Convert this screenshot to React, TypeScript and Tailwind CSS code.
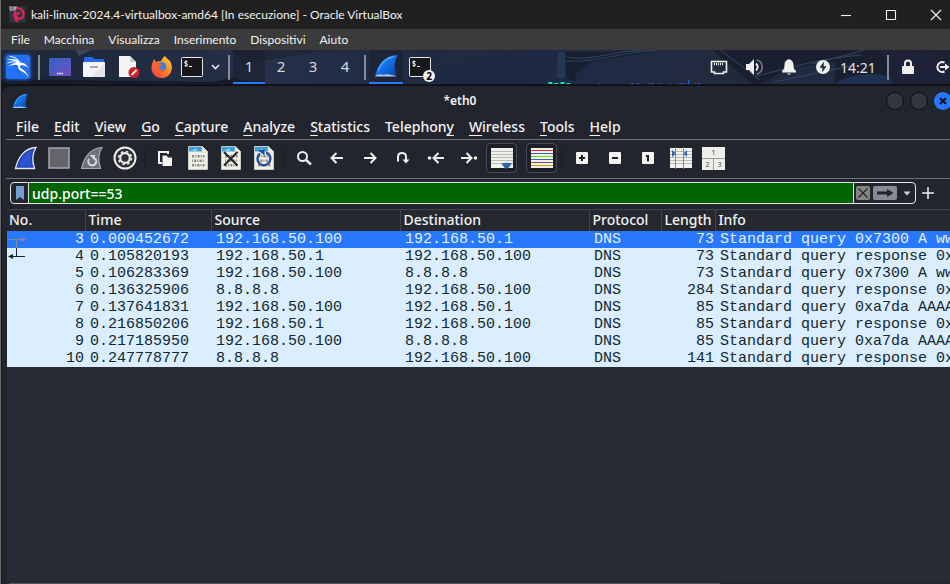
import type { ReactNode } from "react";

const hostMenu = ["File", "Macchina", "Visualizza", "Inserimento", "Dispositivi", "Aiuto"];

const menu: [string, string, string][] = [
  ["", "F", "ile"],
  ["", "E", "dit"],
  ["", "V", "iew"],
  ["", "G", "o"],
  ["", "C", "apture"],
  ["", "A", "nalyze"],
  ["", "S", "tatistics"],
  ["Telephon", "y", ""],
  ["", "W", "ireless"],
  ["", "T", "ools"],
  ["", "H", "elp"],
];

const packets = [
  [3, "0.000452672", "192.168.50.100", "192.168.50.1", "DNS", 73, "Standard query 0x7300 A ww"],
  [4, "0.105820193", "192.168.50.1", "192.168.50.100", "DNS", 73, "Standard query response 0x"],
  [5, "0.106283369", "192.168.50.100", "8.8.8.8", "DNS", 73, "Standard query 0x7300 A ww"],
  [6, "0.136325906", "8.8.8.8", "192.168.50.100", "DNS", 284, "Standard query response 0x"],
  [7, "0.137641831", "192.168.50.100", "192.168.50.1", "DNS", 85, "Standard query 0xa7da AAAA"],
  [8, "0.216850206", "192.168.50.1", "192.168.50.100", "DNS", 85, "Standard query response 0x"],
  [9, "0.217185950", "192.168.50.100", "8.8.8.8", "DNS", 85, "Standard query 0xa7da AAAA"],
  [10, "0.247778777", "8.8.8.8", "192.168.50.100", "DNS", 141, "Standard query response 0x"],
] as const;

const columns = ["No.", "Time", "Source", "Destination", "Protocol", "Length", "Info"];

const ruleColors = ["#ef2929", "#3465a4", "#73d216", "#3465a4", "#75507b", "#c4a000"];

function Icon({ children, size = 24 }: { children: ReactNode; size?: number }) {
  return (
    <svg width={size} height={size} viewBox={`0 0 ${size} ${size}`} className="shrink-0" aria-hidden="true">
      {children}
    </svg>
  );
}

function PanelButton({ label, className, children }: { label: string; className: string; children: ReactNode }) {
  return (
    <button type="button" aria-label={label} className={`flex h-full shrink-0 items-center justify-center ${className}`}>
      {children}
    </button>
  );
}

function PanelSeparator() {
  return <span className="mx-[3px] h-[25px] w-[2px] shrink-0 bg-[#858b96]" />;
}

function ToolButton({ label, checked, children }: { label: string; checked?: boolean; children: ReactNode }) {
  return (
    <button type="button" aria-label={label} className="flex h-full w-[33px] shrink-0 items-center justify-center">
      <span
        className={`flex items-center justify-center rounded ${
          checked ? "h-[30px] w-[31px] border border-[#484b55] bg-[#1d1f28]" : "h-6 w-6"
        }`}
      >
        {children}
      </span>
    </button>
  );
}

function ToolSeparator() {
  return <span className="mx-[3px] h-[18px] w-px shrink-0 bg-[#1c1e26]" />;
}

function BlueFin({ size }: { size: number }) {
  return (
    <svg width={size} height={size} viewBox="0 0 24 24" className="shrink-0" aria-hidden="true">
      <defs>
        <linearGradient id={`fin${size}`} x1="0" y1="0" x2="1" y2="1">
          <stop offset="0" stopColor="#2f8df2" />
          <stop offset="0.5" stopColor="#126fe6" />
          <stop offset="1" stopColor="#0a3f9f" />
        </linearGradient>
      </defs>
      <path d="M1 22 C4 10 10 1.500 24 1 C20.500 6 19.500 14 22.500 22 Z" fill={`url(#fin${size})`} />
      <path d="M4 17 C7 9 12 4 20 2.500" fill="none" stroke="#4aa4f7" strokeWidth="1.500" />
      <path d="M1 22.500 C4 19 8 21.500 11 20.500 S19 21 23 22.500 Z" fill="#a9c8f4" />
    </svg>
  );
}

function Paper({ children }: { children?: ReactNode }) {
  return (
    <Icon>
      <path d="M2.500 .5 H16.500 L21.500 5.500 V23.500 H2.500 Z" fill="#f1f1e6" stroke="#c9c9bd" />
      <path d="M3 1 H16 V5.500 H3 Z" fill="#3ba0dc" />
      <path d="M3 5.500 C6 5.500 8 2 11 2.500 V5.500 Z" fill="#8ccbee" />
      <path d="M16 1 L21.500 6 H16 Z" fill="#fafaf5" stroke="#c9c9bd" strokeWidth=".5" />
      <g stroke="#8b8b83" strokeWidth="2.600" fill="none">
        <path d="M6 10.300 H18.500" strokeDasharray="2.200 1.100 1 1.100" />
        <path d="M6 14.800 H18.500" strokeDasharray="1 1.200 2.200 1" />
        <path d="M6 19.300 H18.500" strokeDasharray="2.200 1 1 1.100" />
      </g>
      {children}
    </Icon>
  );
}

function Terminal() {
  return (
    <>
      <rect x="1.500" y="2.500" width="21" height="19" rx="1" fill="#16181c" stroke="#e8e8e8" />
      <path
        d="M7.500 6.500 H5.300 Q4.500 6.500 4.500 7.500 Q4.500 8.500 6 8.500 Q7.500 8.700 7.500 9.700 Q7.500 10.700 6.500 10.700 H4.500 M6 5.300 V12"
        fill="none"
        stroke="#fff"
        strokeWidth=".9"
      />
      <path d="M9 11.500 H12" stroke="#fff" />
    </>
  );
}

function SquareGlyph({ d }: { d: string }) {
  return (
    <Icon>
      <rect x="6" y="6" width="12" height="12" rx="1" fill="#f3f3ef" />
      <path d={d} fill="none" stroke="#20222a" strokeWidth="2" />
    </Icon>
  );
}

function Arrow({ children }: { children: ReactNode }) {
  return (
    <Icon>
      <g fill="none" stroke="#efefec" strokeWidth="2">
        {children}
      </g>
    </Icon>
  );
}

function HostWindowBar() {
  return (
    <>
      <header className="flex h-[29px] items-center bg-[#202020] pl-2 text-[12px]">
        <svg width="17" height="17" viewBox="0 0 17 17" className="mr-[5px] shrink-0" aria-hidden="true">
          <rect x=".5" y=".5" width="16" height="16" fill="#2c3544" />
          <path
            d="M4.500 3 C10 .5 15 4 14.500 9 C14 13 9 14 7.500 11 C6.500 8 9 6.500 11 7.500 M7 5 C4.500 8 5 13 9 16"
            fill="none"
            stroke="#dc2552"
            strokeWidth="2.200"
          />
          <path d="M0 .5 H8 L6 5 H1 Z" fill="#a9afb8" />
          <path d="M1 2 H5 M2 4 H6" stroke="#4b515c" />
        </svg>
        <h1 className="truncate">kali-linux-2024.4-virtualbox-amd64 [In esecuzione] - Oracle VirtualBox</h1>
        <div className="ml-auto flex h-full">
          {[
            ["Riduci a icona", "M7 12.500 H17"],
            ["Ingrandisci", "M7.500 7.500 H16.500 V16.500 H7.500 Z"],
            ["Chiudi", "M7 7 L17 17 M17 7 L7 17"],
          ].map(([label, d], i) => (
            <button
              key={label}
              type="button"
              aria-label={label}
              className={`flex h-full items-center justify-center ${i === 2 ? "w-7" : "w-[45px]"} ${i === 1 ? "mr-[9px]" : ""}`}
            >
              <Icon>
                <path d={d} fill="none" stroke="#f5f5f5" strokeWidth="1.100" />
              </Icon>
            </button>
          ))}
        </div>
      </header>
      <nav className="flex h-[21px] items-center gap-[14px] bg-[#3b3b3c] pl-[10px] text-[12px]">
        {hostMenu.map((m) => (
          <button key={m} type="button">
            {m}
          </button>
        ))}
      </nav>
    </>
  );
}

function Wallpaper() {
  return (
    <svg className="absolute inset-0 h-full w-full" viewBox="0 0 950 34" preserveAspectRatio="none" aria-hidden="true">
      <defs>
        <linearGradient id="sky" x1="0" x2="1" y1="0" y2="0">
          <stop offset="0" stopColor="#1d2739" />
          <stop offset=".28" stopColor="#253049" />
          <stop offset=".5" stopColor="#1d2940" />
          <stop offset=".6" stopColor="#1e2a45" />
          <stop offset=".75" stopColor="#222a3e" />
          <stop offset="1" stopColor="#1c2233" />
        </linearGradient>
      </defs>
      <rect width="950" height="34" fill="url(#sky)" />
      <path d="M0 34 L0 29 L210 32 L232 28 L262 34 Z" fill="#151b29" />
      <path d="M230 0 H330 L240 14 Z" fill="#1f2738" />
      <path d="M75 0 L90 0 L78 6 Z" fill="#3a4562" />
      <path d="M440 0 H520 L440 16 Z" fill="#222a40" />
      <path d="M558 2 H565 V28 H556 Z" fill="#243753" />
      <path d="M565 2 H650 L590 12 L575 24 V32 L566 28 Z" fill="#171e2d" />
      <path d="M566 7 C590 11 600 4 640 0 M566 11 C590 13 615 4 655 0" fill="none" stroke="#2f4663" />
      <path d="M712 0 L752 34 H900 L880 0 Z" fill="#191f2f" />
      <path d="M760 34 L790 18 L835 12 V34 Z" fill="#202a40" />
      <path d="M756 26 C790 18 820 8 862 5 M774 32 L850 16 M720 0 L760 30 M812 14 L850 4 L864 0" fill="none" stroke="#32465e" />
      <path d="M835 34 C850 22 885 20 905 34 Z" fill="#1f3152" />
      <path d="M886 0 L950 10 V34 H892 Z" fill="#1d2238" />
      <path d="M548 32 H552 V34 H548 Z M554 33 H558 V34 H554 Z M560 32 H564 V34 H560 Z M566 33 H570 V34 H566 Z" fill="#0be0c4" />
      <path
        d="M598 33.500 H599 M631 33.500 H633 M637 33.500 H639 M648 33.500 H649 M651 33.500 H653 M657 33.500 H658 M660 33.500 H661 M669 33.500 H670 M678 33.500 H679 M680 33.500 H681 M682 33.500 H684 M686 33.500 H687 M695 33.500 H696 M698 33.500 H700"
        stroke="#2a71e8"
      />
      <path d="M688.500 30 V34" stroke="#2a71e8" />
    </svg>
  );
}

function DesktopPanel() {
  return (
    <div className="relative h-[34px] overflow-hidden font-['Noto_Sans',sans-serif]">
      <Wallpaper />
      <div className="relative flex h-full items-center">
        <PanelButton label="Applications" className="w-[34px]">
          <svg width="24" height="24" viewBox="0 0 24 24" className="shadow-[0_0_4px_#2575ff]" aria-hidden="true">
            <rect width="24" height="24" rx="2" fill="#2371f5" />
            <path
              d="M1 4.500 C7 3.500 12 4 14 7.500 C17.500 7 20.500 9.500 22.500 13 C19.500 10.500 16.500 9.800 14.500 10.500 C11.500 14 20 13 22.500 22.500 C19 15.500 11.500 17 12 10.500 C9 9 5 10 2 12 C5 8.500 8 7.500 11.500 8 C9 5.500 5 5 1 4.500 Z"
              fill="#fff"
            />
            <path d="M4 1.500 C9 2 12 4 13.500 7 M1.500 8 C5 6.500 8 6.500 11 7.500" fill="none" stroke="#fff" strokeWidth="1" />
          </svg>
        </PanelButton>
        <PanelSeparator />
        <PanelButton label="Show desktop" className="w-[34px]">
          <Icon>
            <defs>
              <linearGradient id="desk" x1="0" x2="1" y1="0" y2="1">
                <stop offset="0" stopColor="#2b63c4" />
                <stop offset="1" stopColor="#7350c0" />
              </linearGradient>
            </defs>
            <rect x="1" y="3" width="22" height="18" rx="1" fill="url(#desk)" />
            <path d="M9 18.500 H15" stroke="#fff" strokeWidth="1.500" strokeDasharray="1.400 .8" />
          </Icon>
        </PanelButton>
        <PanelButton label="Files" className="w-[34px]">
          <Icon>
            <path d="M2 3 Q2 2 3 2 H10 L12.500 4 H21 Q22 4 22 5 V10 H2 Z" fill="#2469e6" />
            <rect x="1" y="7" width="22" height="15" rx="1" fill="#f4f5f7" />
            <path d="M23 8 V21 Q23 22 22 22 H9 Z" fill="#e5e7eb" />
            <path d="M8 12 H16" stroke="#8b8f96" strokeWidth="1.500" />
          </Icon>
        </PanelButton>
        <PanelButton label="Text editor" className="w-[34px]">
          <Icon>
            <path d="M3 1 H14 L20 7 V22 H3 Z" fill="#f4f4f5" />
            <path d="M14 1 L20 7 H14 Z" fill="#c9cbd0" />
            <circle cx="18" cy="17.500" r="5.500" fill="#d21f26" />
            <path d="M15.500 20 L20.500 15" stroke="#fff" strokeWidth="1.800" />
          </Icon>
        </PanelButton>
        <PanelButton label="Firefox" className="w-[34px]">
          <Icon>
            <defs>
              <linearGradient id="fox" x1="1" x2="0" y1="0" y2="1">
                <stop offset="0" stopColor="#ffd940" />
                <stop offset=".45" stopColor="#ff8a1f" />
                <stop offset="1" stopColor="#ef2c55" />
              </linearGradient>
            </defs>
            <path d="M15 1 C17 4 20 5 21 8 C24 16 19 23 12 23 C5 23 1 18 1.500 12 C1.500 9 3 7 4 4 L6 7 C8 6 10 6 11 6 C12 4 13 2 15 1 Z" fill="url(#fox)" />
            <circle cx="11.500" cy="12" r="5" fill="#3f7fe0" />
            <path d="M4 7 C8 6.500 10 9 12.500 9.500 C10.500 11 9 11 9 13 C11 15.500 13 15.500 15.500 14 C14 18.500 7 18.500 5 13 Z" fill="#f4622f" />
          </Icon>
        </PanelButton>
        <PanelButton label="Terminal" className="w-[26px]">
          <Icon>
            <Terminal />
          </Icon>
        </PanelButton>
        <PanelButton label="More terminals" className="w-5">
          <svg width="9" height="6" viewBox="0 0 9 6" aria-hidden="true">
            <path d="M1 1 L4.500 4.500 L8 1" fill="none" stroke="#e8e8e8" strokeWidth="1.600" />
          </svg>
        </PanelButton>
        <PanelSeparator />
        {[1, 2, 3, 4].map((n) => (
          <button
            key={n}
            type="button"
            className={`h-full w-8 shrink-0 border-b-2 text-center text-[15px] text-[#d5d8de] ${
              n === 1 ? "border-[#2777ff] bg-[#1b2131]/70" : "border-transparent"
            }`}
          >
            {n}
          </button>
        ))}
        <PanelSeparator />
        <PanelButton label="Wireshark" className="w-[34px] border-b-2 border-[#2777ff] bg-[#1b2131]/70">
          <BlueFin size={24} />
        </PanelButton>
        <PanelButton label="Terminal, 2 windows" className="relative w-[34px]">
          <Icon>
            <Terminal />
          </Icon>
          <span className="absolute right-[2px] bottom-[2px] flex size-3 items-center justify-center rounded-full bg-[#efefef] text-[10px] leading-none font-bold text-black">
            2
          </span>
        </PanelButton>
        <div className="-mr-[10px] ml-auto flex h-full items-center">
          <PanelButton label="Network" className="w-[35px]">
            <Icon>
              <path d="M5.500 6.500 H20.500 V17 H17.500 V18.500 H8.500 V17 H5.500 Z" fill="none" stroke="#f0f0ee" strokeWidth="1.600" />
              <path d="M8 9 H18" stroke="#f0f0ee" strokeWidth="2.500" strokeDasharray="1 1" />
            </Icon>
          </PanelButton>
          <PanelButton label="Volume" className="w-[35px]">
            <Icon>
              <path d="M5 9 H8 L13 4 V20 L8 15 H5 Z" fill="#f0f0ee" />
              <path d="M15 8.500 Q18.500 12 15 15.500" fill="none" stroke="#f0f0ee" strokeWidth="1.800" />
              <path d="M15.500 5 C23 6.500 23 17.500 15.500 19" fill="none" stroke="#747a86" strokeWidth="1.600" />
            </Icon>
          </PanelButton>
          <PanelButton label="Notifications" className="w-[35px]">
            <Icon>
              <path d="M13 4 C15 5 17.500 6 17.500 10 C17.500 13 18 14.500 20 16 V17.500 H6 V16 C8 14.500 8.500 13 8.500 10 C8.500 6 11 5 13 4 Z M11 18.500 H15 L13 20 Z" fill="#f0f0ee" />
            </Icon>
          </PanelButton>
          <PanelButton label="Power" className="w-[35px]">
            <Icon>
              <circle cx="12" cy="12" r="7" fill="#f0f0ee" />
              <path d="M13 6.500 L8.500 12.700 H11.500 L11 17.500 L15.500 11.300 H12.500 Z" fill="#1d2230" />
            </Icon>
          </PanelButton>
          <button type="button" className="h-full w-11 shrink-0 text-left text-[14px] text-[#e2e4e8]">
            14:21
          </button>
          <PanelSeparator />
          <PanelButton label="Lock screen" className="w-[34px]">
            <Icon>
              <path d="M8 12 V8.500 Q8 5.500 11 5.500 Q14 5.500 14 8.500 V12" fill="none" stroke="#f0f0ee" strokeWidth="2" />
              <rect x="5" y="11" width="12" height="8" rx="1" fill="#f0f0ee" />
            </Icon>
          </PanelButton>
          <PanelButton label="Log out" className="w-[34px]">
            <Icon>
              <path d="M13.500 7.500 A5 5 0 1 0 13.500 16.500 M9 12 H15" fill="none" stroke="#f0f0ee" strokeWidth="2" />
              <path d="M14 8.500 L18.500 12 L14 15.500 Z" fill="#f0f0ee" />
            </Icon>
          </PanelButton>
        </div>
      </div>
    </div>
  );
}

function MainToolbar() {
  return (
    <div role="toolbar" aria-label="Main toolbar" className="ml-1 flex h-[39px] items-center overflow-hidden border-b border-[#6d6f76] pb-[2px] pl-[3px]">
      <ToolButton label="Start capture">
        <Icon>
          <path d="M1.500 22.500 C4 11 11 2 22 1.500 C18.500 7 18 15 20.500 22.500 Z" fill="#2342b8" stroke="#e4e6ec" strokeWidth="1.300" />
          <path d="M5 20.500 C7 12 12 6 18 4 C16 9 16 14 17.500 20.500 Z" fill="#2b55d0" />
        </Icon>
      </ToolButton>
      <ToolButton label="Stop capture">
        <Icon>
          <rect x="2" y="2" width="20" height="20" fill="#63656b" stroke="#a5a8ae" strokeWidth="1.500" />
        </Icon>
      </ToolButton>
      <ToolButton label="Restart capture">
        <Icon>
          <path d="M1.500 22.500 C4 11 11 2 22 1.500 C18.500 7 18 15 20.500 22.500 Z" fill="#6f7279" stroke="#a5a8ae" strokeWidth="1.200" />
          <path d="M9 13 A4 4 0 1 0 15 12.500" fill="none" stroke="#d8dade" strokeWidth="2" />
          <path d="M9.500 9 H15 V14.500 Z" fill="#d8dade" />
        </Icon>
      </ToolButton>
      <ToolButton label="Capture options">
        <Icon>
          <circle cx="12" cy="12" r="10.500" fill="#2d2f36" stroke="#ececea" strokeWidth="2" />
          <circle cx="12" cy="12" r="6.500" fill="none" stroke="#ececea" strokeWidth="1.600" strokeDasharray="2.600 2.505" />
          <circle cx="12" cy="12" r="4.800" fill="none" stroke="#ececea" strokeWidth="2.200" />
        </Icon>
      </ToolButton>
      <ToolSeparator />
      <ToolButton label="Open file">
        <Icon>
          <path d="M15 8 V6 H6 V17 H9" fill="none" stroke="#f3f3ef" strokeWidth="2" />
          <path d="M9.500 9.500 H13.500 L15 11.500 H19 V20 H9.500 Z" fill="#f3f3ef" />
        </Icon>
      </ToolButton>
      <ToolButton label="Save file">
        <Paper />
      </ToolButton>
      <ToolButton label="Close file">
        <Paper>
          <path d="M5 6 L18.500 19.500 M18.500 6 L5 19.500" stroke="#202229" strokeWidth="2" />
        </Paper>
      </ToolButton>
      <ToolButton label="Reload file">
        <Paper>
          <path d="M14 6.500 A6.500 6.500 0 1 1 8 7.500" fill="none" stroke="#24509f" strokeWidth="2.400" />
          <path d="M5.500 4 L12.500 3.500 V9.500 Z" fill="#24509f" />
        </Paper>
      </ToolButton>
      <ToolSeparator />
      <ToolButton label="Find packet">
        <Arrow>
          <circle cx="10.500" cy="10.500" r="4.500" />
          <path d="M14 14 L19 18.500" strokeWidth="2.400" />
        </Arrow>
      </ToolButton>
      <ToolButton label="Previous packet">
        <Arrow>
          <path d="M18 12 H7 M11.500 7 L6.500 12 L11.500 17" />
        </Arrow>
      </ToolButton>
      <ToolButton label="Next packet">
        <Arrow>
          <path d="M6 12 H17 M12.500 7 L17.500 12 L12.500 17" />
        </Arrow>
      </ToolButton>
      <ToolButton label="Go to packet">
        <Arrow>
          <path d="M7 15.500 V11 Q7 7 11 7 Q15 7 15 11 V16" />
          <path d="M11.500 13.500 H18.500 L15 17.500 Z" fill="#efefec" stroke="none" />
        </Arrow>
      </ToolButton>
      <ToolButton label="First packet">
        <Arrow>
          <path d="M20 12 H11 M14.500 7 L9.500 12 L14.500 17" />
          <circle cx="5.500" cy="12" r="1.800" fill="#efefec" stroke="none" />
        </Arrow>
      </ToolButton>
      <ToolButton label="Last packet">
        <Arrow>
          <path d="M4 12 H13 M9.500 7 L14.500 12 L9.500 17" />
          <circle cx="18.500" cy="12" r="1.800" fill="#efefec" stroke="none" />
        </Arrow>
      </ToolButton>
      <ToolButton label="Auto scroll" checked>
        <Icon>
          <rect x="1" y="2" width="22" height="20" fill="#f1f1ec" />
          <path d="M1 5.500 H23 M1 8.500 H23 M1 11.500 H23 M1 14.500 H23 M1 17.500 H23" stroke="#b9bab5" />
          <path d="M11 17.500 Q16.500 16 22 17.500 Q20 20 18 22.500 H15 Q13.500 20 11 17.500 Z" fill="#3465a4" />
        </Icon>
      </ToolButton>
      <ToolSeparator />
      <ToolButton label="Colorize packets" checked>
        <Icon>
          <rect x="1" y="2" width="22" height="20" fill="#f1f1ec" />
          {ruleColors.map((color, i) => (
            <rect key={i} x="1" y={4 + i * 3} width="22" height="1" fill={color} />
          ))}
        </Icon>
      </ToolButton>
      <ToolSeparator />
      <ToolButton label="Zoom in">
        <SquareGlyph d="M9 12 H15 M12 9 V15" />
      </ToolButton>
      <ToolButton label="Zoom out">
        <SquareGlyph d="M9 12 H15" />
      </ToolButton>
      <ToolButton label="Normal size">
        <SquareGlyph d="M10 10 H12 V15.500" />
      </ToolButton>
      <ToolButton label="Resize columns">
        <Icon>
          <rect x="1" y="2" width="22" height="20" fill="#f1f1ec" />
          <path d="M1 5.500 H23 M1 8.500 H23 M1 11.500 H23 M1 14.500 H23 M1 17.500 H23" stroke="#b9bab5" />
          <path d="M6.500 1 V23 M14.500 1 V23" stroke="#85867f" />
          <path d="M3 4 L7 7.500 L3 11 Z M18 4 L14.500 7.500 L18 11 Z" fill="#3465a4" />
        </Icon>
      </ToolButton>
      <ToolButton label="Reset layout">
        <span className="grid h-[23px] w-[23px] grid-cols-2 grid-rows-2 gap-px bg-[#9b9b97] text-[7px] leading-none text-[#45464a]">
          <span className="col-span-2 flex items-center justify-center bg-[#eeeeea]">1</span>
          <span className="flex items-center justify-center bg-[#eeeeea]">2</span>
          <span className="flex items-center justify-center bg-[#eeeeea]">3</span>
        </span>
      </ToolButton>
    </div>
  );
}

function FilterBar() {
  return (
    <div className="flex items-center pt-[3px] pr-4 pb-[5px] pl-2">
      <div className="flex h-[22px] min-w-0 flex-1 overflow-hidden rounded border border-[#e2e4df]">
        <button type="button" aria-label="Filter bookmarks" className="flex w-[18px] shrink-0 items-center justify-center border-r border-[#e2e4df]">
          <svg width="10" height="15" viewBox="0 0 10 15" aria-hidden="true">
            <path d="M1 0 H9 V14 L5 11 L1 14 Z" fill="#729fcf" />
          </svg>
        </button>
        <input
          aria-label="Display filter"
          defaultValue="udp.port==53"
          spellCheck={false}
          className="min-w-0 flex-1 bg-[#006400] pl-[3px] text-[14px] font-medium text-white outline-none"
        />
        <div className="flex shrink-0 items-center border-l border-[#e2e4df] pl-[2px]">
          <button type="button" aria-label="Clear filter" className="h-[14px] w-[14px] rounded-xs bg-[#85867f]">
            <svg width="14" height="14" viewBox="0 0 14 14" aria-hidden="true">
              <path d="M2.500 2.500 L11.500 11.500 M11.500 2.500 L2.500 11.500" stroke="#25272f" strokeWidth="1.300" />
            </svg>
          </button>
          <button type="button" aria-label="Apply filter" className="ml-[3px] h-[14px] w-6 rounded-xs bg-[#878b96]">
            <svg width="24" height="14" viewBox="0 0 24 14" aria-hidden="true">
              <path d="M4 5.500 H14 V3 L20.500 7 L14 11 V8.500 H4 Z" fill="#22242d" />
            </svg>
          </button>
          <button type="button" aria-label="Recent filters" className="flex h-full w-[18px] items-center justify-center pl-[2px]">
            <svg width="8" height="5" viewBox="0 0 8 5" aria-hidden="true">
              <path d="M.5 .5 H7.500 L4 4.500 Z" fill="#d4d5d2" />
            </svg>
          </button>
        </div>
      </div>
      <button type="button" aria-label="Add filter button" className="ml-[6px] flex h-[22px] w-3 items-center justify-center">
        <svg width="12" height="12" viewBox="0 0 12 12" className="shrink-0" aria-hidden="true">
          <path d="M6 0 V12 M0 6 H12" stroke="#f0f0ee" strokeWidth="1.500" />
        </svg>
      </button>
    </div>
  );
}

function PacketList() {
  return (
    <div className="ml-[5px] flex-1 overflow-hidden bg-[#282a35]">
      <table className="w-full table-fixed border-collapse">
        <colgroup>
          <col className="w-[78px]" />
          <col className="w-[126px]" />
          <col className="w-[189px]" />
          <col className="w-[189px]" />
          <col className="w-[72px]" />
          <col className="w-[54px]" />
          <col />
        </colgroup>
        <thead>
          <tr className="h-[22px] bg-[#262830] text-[14px] leading-5">
            {columns.map((c, i) => (
              <th
                key={c}
                scope="col"
                className={`p-0 text-left font-medium whitespace-nowrap shadow-[inset_0_1px_#42454e] ${
                  i === 0 ? "pl-[2px]" : "pl-[3px]"
                } ${i < 6 ? "border-r border-[#42454e]" : ""}`}
              >
                {c}
              </th>
            ))}
          </tr>
        </thead>
        <tbody className="font-['Liberation_Mono',monospace] text-[15px] leading-[17px]">
          {packets.map(([no, time, source, destination, protocol, length, info], i) => (
            <tr key={no} className={`h-[17px] whitespace-nowrap ${i === 0 ? "bg-[#2777ff] text-[#e4f0ff]" : "bg-[#daeeff] text-[#12272e]"}`}>
              <td className="relative p-0 pr-px text-right">
                {i === 0 && (
                  <svg width="20" height="17" viewBox="0 0 20 17" className="absolute top-0 left-0" aria-hidden="true">
                    <path d="M2 8.500 H15 M9.500 8.500 V17" stroke="#87898c" fill="none" />
                    <path d="M14 6 L19 8.500 L14 11 Z" fill="#87898c" />
                  </svg>
                )}
                {i === 1 && (
                  <svg width="20" height="17" viewBox="0 0 20 17" className="absolute top-0 left-0" aria-hidden="true">
                    <path d="M4 8.500 H18 M9.500 0 V8.500" stroke="#12272e" fill="none" />
                    <path d="M6 6 L1 8.500 L6 11 Z" fill="#12272e" />
                  </svg>
                )}
                {no}
              </td>
              <td className="p-0 pl-[5px]">{time}</td>
              <td className="p-0 pl-[5px]">{source}</td>
              <td className="p-0 pl-[5px]">{destination}</td>
              <td className="p-0 pl-[5px]">{protocol}</td>
              <td className="p-0 pr-px text-right">{length}</td>
              <td className="overflow-hidden p-0 pl-[5px]">{info}</td>
            </tr>
          ))}
        </tbody>
      </table>
    </div>
  );
}

export default function App() {
  return (
    <div className="flex h-screen flex-col overflow-hidden border-l border-[#6c6c6c] bg-[#14161d] font-['Lato',sans-serif] text-[#f2f2f2]">
      <HostWindowBar />
      <DesktopPanel />
      <main className="mt-px ml-px flex min-h-0 flex-1 flex-col rounded-tl-lg border-t border-[#0d0e12] bg-[#23252e] font-['Noto_Sans',sans-serif]">
        <div className="flex h-[30px] items-center">
          <div className="w-[72px] shrink-0 pl-[10px]">
            <BlueFin size={16} />
          </div>
          <h2 className="flex-1 pr-10 text-center text-[12px] font-semibold">*eth0</h2>
          <div className="-mr-[2px] flex gap-[6px]">
            <button type="button" aria-label="Minimize" className="size-[18px] rounded-full border border-[#0c0d11] bg-[#343640]" />
            <button type="button" aria-label="Maximize" className="size-[18px] rounded-full border border-[#0c0d11] bg-[#343640]" />
            <button type="button" aria-label="Close" className="flex size-[18px] items-center justify-center rounded-full bg-[#2777ff]">
              <svg width="8" height="8" viewBox="0 0 8 8" aria-hidden="true">
                <path d="M1 1 L7 7 M7 1 L1 7" stroke="#0f1420" strokeWidth="2" />
              </svg>
            </button>
          </div>
        </div>
        <nav className="ml-1 flex h-[24px] items-center gap-[15px] border-b border-[#6d6f76] pb-[2px] pl-[10px] text-[14px] font-medium">
          {menu.map(([before, key, after]) => (
            <button key={before + key + after} type="button">
              {before}
              <span className="underline underline-offset-[3px]">{key}</span>
              {after}
            </button>
          ))}
        </nav>
        <MainToolbar />
        <FilterBar />
        <PacketList />
        <div className="ml-[7px] h-px w-3/4 bg-[#50525a]" />
      </main>
    </div>
  );
}
